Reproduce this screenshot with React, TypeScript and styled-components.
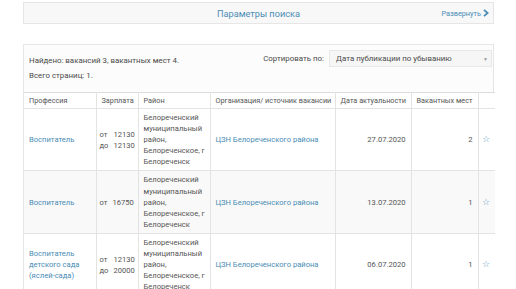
import React from "react";
import styled, { createGlobalStyle } from "styled-components";

const GlobalStyle = createGlobalStyle`
  body {
    margin: 0;
    background: #ffffff;
    font-family: Roboto, "Liberation Sans", sans-serif;
    color: #555555;
  }
  * { box-sizing: border-box; }
`;

const Page = styled.div`
  width: 471px;
  margin-left: 23px;
  padding-top: 2px;
`;

const SearchBar = styled.div`
  height: 22px;
  display: grid;
  grid-template-columns: 1fr auto 1fr;
  align-items: center;
  background: #f8f8f8;
  border: 1px solid #e6e6e6;
`;

const SearchTitle = styled.div`
  grid-column: 2;
  font-size: 9.2px;
  color: #4a8db5;
`;

const Expand = styled.a`
  grid-column: 3;
  justify-self: end;
  margin-right: 4px;
  font-size: 7.3px;
  color: #4a8db5;
  display: flex;
  align-items: center;
  gap: 2px;
`;

const Results = styled.div`
  margin-top: 20px;
  border: 1px solid #e6e6e6;
  border-bottom: none;
`;

const Info = styled.div`
  height: 47px;
  display: flex;
  justify-content: space-between;
  background: #fcfcfc;
  padding: 0 0 0 5px;
  font-size: 7.9px;
  color: #4a4a4a;
`;

const InfoLines = styled.div`
  display: flex;
  flex-direction: column;
  gap: 6px;
  padding-top: 11px;
`;

const SortBox = styled.div`
  display: flex;
  align-items: center;
  gap: 5px;
  padding-top: 5px;
  height: 22px;
  margin-right: 1px;
`;

const Select = styled.div`
  width: 163px;
  height: 17px;
  display: flex;
  align-items: center;
  justify-content: space-between;
  padding: 0 3px 0 6px;
  background: #f6f6f6;
  border: 1px solid #e8e8e8;
  color: #4a4a4a;
  font-size: 7.9px;
`;

const Caret = styled.span`
  font-size: 5px;
  color: #999;
`;

const Table = styled.table`
  width: 100%;
  border-collapse: collapse;
  table-layout: fixed;
  font-size: 7.6px;
`;

const Th = styled.th<{ $w: number }>`
  width: ${(p) => p.$w}px;
  height: 16px;
  text-align: left;
  font-weight: normal;
  font-size: 7.3px;
  color: #555;
  padding: 0 2px 0 5px;
  white-space: nowrap;
  overflow: hidden;
  border: 1px solid #e3e3e3;
  border-top-color: #dcdcdc;
  background: #ffffff;
  &:first-child { border-left: none; }
  &:last-child { border-right: none; }
`;

const Row = styled.tr<{ $striped?: boolean }>`
  background: ${(p) => (p.$striped ? "#f9f9f9" : "#ffffff")};
`;

const Td = styled.td<{ $align?: string }>`
  padding: 3px 5px 3px 5px;
  vertical-align: middle;
  text-align: ${(p) => p.$align || "left"};
  border: 1px solid #e3e3e3;
  line-height: 11.1px;
  color: #555;
  &:first-child { border-left: none; }
  &:last-child { border-right: none; }
`;

const DistrictCell = styled(Td)`
  padding-right: 2px;
  white-space: nowrap;
`;

const Link = styled.a`
  color: #4a8db5;
`;

const Salary = styled.div`
  display: grid;
  grid-template-columns: auto auto;
  column-gap: 5px;
  justify-content: start;
  margin-left: -2px;
  & span:nth-child(even) { text-align: right; }
`;

const StarCell = styled(Td)`
  padding: 0 0 0 3px;
`;

const Star = styled.span`
  color: #5d9cc2;
  font-size: 9px;
`;

type Vacancy = {
  title: string[];
  from: string;
  to?: string;
  date: string;
  count: number;
};

const vacancies: Vacancy[] = [
  { title: ["Воспитатель"], from: "12130", to: "12130", date: "27.07.2020", count: 2 },
  { title: ["Воспитатель"], from: "16750", date: "13.07.2020", count: 1 },
  {
    title: ["Воспитатель", "детского сада", "(яслей-сада)"],
    from: "12130",
    to: "20000",
    date: "06.07.2020",
    count: 1,
  },
];

const District = () => (
  <>
    Белореченский
    <br />
    муниципальный
    <br />
    район,
    <br />
    Белореченское, г
    <br />
    Белореченск
  </>
);

export default function App() {
  return (
    <>
      <GlobalStyle />
      <Page>
        <SearchBar>
          <SearchTitle>Параметры поиска</SearchTitle>
          <Expand>
            Развернуть
            <svg width="6" height="8" viewBox="0 0 6 8">
              <path d="M1 0.8 L4.6 4 L1 7.2" fill="none" stroke="#4a8db5" strokeWidth="1.8" />
            </svg>
          </Expand>
        </SearchBar>
        <Results>
          <Info>
            <InfoLines>
              <div>Найдено: вакансий 3, вакантных мест 4.</div>
              <div>Всего страниц: 1.</div>
            </InfoLines>
            <SortBox>
              <span>Сортировать по:</span>
              <Select>
                <span>Дата публикации по убыванию</span>
                <Caret>▼</Caret>
              </Select>
            </SortBox>
          </Info>
          <Table>
            <thead>
              <tr>
                <Th $w={72}>Профессия</Th>
                <Th $w={42}>Зарплата</Th>
                <Th $w={72}>Район</Th>
                <Th $w={125}>Организация/ источник вакансии</Th>
                <Th $w={76}>Дата актуальности</Th>
                <Th $w={67}>Вакантных мест</Th>
                <Th $w={17}></Th>
              </tr>
            </thead>
            <tbody>
              {vacancies.map((v, i) => (
                <Row key={i} $striped={i === 1}>
                  <Td>
                    <Link>
                      {v.title.map((t, j) => (
                        <React.Fragment key={j}>
                          {j > 0 && <br />}
                          {t}
                        </React.Fragment>
                      ))}
                    </Link>
                  </Td>
                  <Td>
                    <Salary>
                      <span>от</span>
                      <span>{v.from}</span>
                      {v.to && (
                        <>
                          <span>до</span>
                          <span>{v.to}</span>
                        </>
                      )}
                    </Salary>
                  </Td>
                  <DistrictCell>
                    <District />
                  </DistrictCell>
                  <Td>
                    <Link>ЦЗН Белореченского района</Link>
                  </Td>
                  <Td $align="right">{v.date}</Td>
                  <Td $align="right">{v.count}</Td>
                  <StarCell>
                    <Star>☆</Star>
                  </StarCell>
                </Row>
              ))}
            </tbody>
          </Table>
        </Results>
      </Page>
    </>
  );
}
